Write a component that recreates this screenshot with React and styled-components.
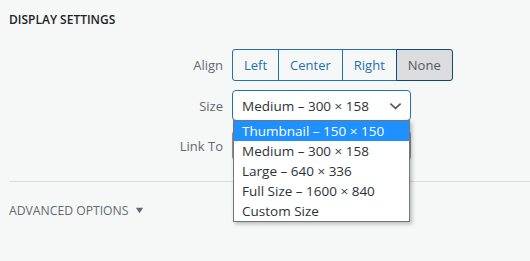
import styled, { createGlobalStyle } from "styled-components"

const Global = createGlobalStyle`
  html, body { margin: 0; padding: 0; background: #f6f7f7; }
  body { font-family: "Open Sans", "Noto Sans", sans-serif; color: #3c434a; }
`

const sizes = [
  "Thumbnail – 150 × 150",
  "Medium – 300 × 158",
  "Large – 640 × 336",
  "Full Size – 1600 × 840",
  "Custom Size",
]

export default function App() {
  return (
    <Page>
      <Global />
      <Heading>Display Settings</Heading>
      <Rows>
        <Row>
          <Label>Align</Label>
          <Group>
            <GroupButton>Left</GroupButton>
            <GroupButton>Center</GroupButton>
            <GroupButton>Right</GroupButton>
            <GroupButton active>None</GroupButton>
          </Group>
        </Row>
        <Row>
          <Label>Size</Label>
          <SelectWrap>
            <Select focused>
              <span>Medium – 300 × 158</span>
              <Chevron viewBox="0 0 14 8">
                <path d="M1.5 1.5l5.5 5 5.5-5" fill="none" stroke="#50575e" strokeWidth="1.7" />
              </Chevron>
            </Select>
            <Options>
              {sizes.map((s, i) => (
                <Option key={s} selected={i === 0}>{s}</Option>
              ))}
            </Options>
          </SelectWrap>
        </Row>
        <Row>
          <Label>Link To</Label>
          <Select>
            <span>None</span>
          </Select>
        </Row>
      </Rows>
      <Divider />
      <Advanced>
        Advanced Options
        <Caret viewBox="0 0 10 10">
          <path d="M1 2h8L5 8z" fill="#646970" />
        </Caret>
      </Advanced>
    </Page>
  )
}

const Page = styled.div`
  width: 530px;
  height: 261px;
  overflow: hidden;
  box-sizing: border-box;
  padding-top: 11px;
`

const Heading = styled.h2`
  margin: 0 0 0 9px;
  font-size: 12px;
  font-weight: 600;
  text-transform: uppercase;
  color: #1d2327;
  line-height: 18px;
`

const Rows = styled.div`
  display: flex;
  flex-direction: column;
  gap: 9px;
  margin-top: 20px;
  padding-left: 9px;
`

const Row = styled.div`
  display: flex;
  align-items: center;
  gap: 9px;
`

const Label = styled.div`
  width: 214px;
  text-align: right;
  font-size: 13px;
  color: #646970;
`

const Group = styled.div`
  display: flex;
`

const GroupButton = styled.div`
  height: 32px;
  box-sizing: border-box;
  padding: 0 11px;
  display: flex;
  align-items: center;
  font-size: 13px;
  color: ${p => (p.active ? "#50575e" : "#2271b1")};
  background: ${p => (p.active ? "#dcdcde" : "#f6f7f7")};
  border: 1px solid ${p => (p.active ? "#0a4b78" : "#2271b1")};
  margin-left: -1px;
  &:first-child { margin-left: 0; border-radius: 3px 0 0 3px; }
  &:last-child { border-radius: 0 3px 3px 0; }
`

const SelectWrap = styled.div`
  position: relative;
`

const Select = styled.div`
  width: 179px;
  height: 31px;
  box-sizing: border-box;
  display: flex;
  align-items: center;
  justify-content: space-between;
  padding: 0 8px 0 9px;
  background: #fff;
  border: 1px solid ${p => (p.focused ? "#2271b1" : "#8c8f94")};
  border-radius: 4px;
  font-size: 13.5px;
  color: #2c3338;
`

const Chevron = styled.svg`
  width: 13px;
  height: 8px;
`

const Options = styled.div`
  position: absolute;
  left: 1px;
  top: 30px;
  width: 177px;
  box-sizing: border-box;
  background: #fff;
  border: 1px solid #767676;
  box-shadow: 2px 2px 4px rgba(0, 0, 0, 0.25);
  z-index: 2;
`

const Option = styled.div`
  height: 20px;
  line-height: 20px;
  padding-left: 8px;
  font-size: 13.5px;
  color: ${p => (p.selected ? "#fff" : "#2c3338")};
  background: ${p => (p.selected ? "#1e90ff" : "transparent")};
`

const Divider = styled.hr`
  margin: 20px 0 0 9px;
  border: 0;
  border-top: 1px solid #dcdcde;
`

const Advanced = styled.div`
  margin: 20px 0 0 9px;
  display: flex;
  align-items: center;
  gap: 7px;
  font-size: 12.2px;
  font-weight: 400;
  text-transform: uppercase;
  color: #646970;
`

const Caret = styled.svg`
  width: 9px;
  height: 9px;
`
